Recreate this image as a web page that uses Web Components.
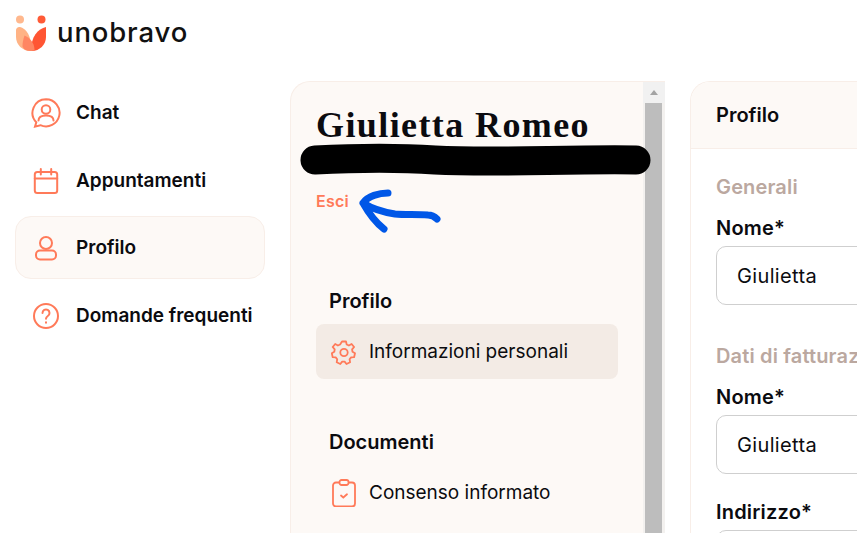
<!DOCTYPE html>
<html lang="it">
<head>
<meta charset="utf-8">
<title>unobravo</title>
<style>
  html, body { margin: 0; height: 100%; overflow: hidden; background: #fff; }
  body { font-family: Inter, "Liberation Sans", sans-serif; color: #0b0b0f; }
</style>
</head>
<body>
<ub-app>
  <ub-logo slot="header"></ub-logo>

  <ub-nav-item slot="nav" label="Chat" icon="chat"></ub-nav-item>
  <ub-nav-item slot="nav" label="Appuntamenti" icon="calendar"></ub-nav-item>
  <ub-nav-item slot="nav" label="Profilo" icon="user" active></ub-nav-item>
  <ub-nav-item slot="nav" label="Domande frequenti" icon="help"></ub-nav-item>

  <ub-account-card slot="account" name="Giulietta Romeo">
    <ub-menu-group title="Profilo">
      <ub-menu-row label="Informazioni personali" icon="gear" active></ub-menu-row>
    </ub-menu-group>
    <ub-menu-group title="Documenti">
      <ub-menu-row label="Consenso informato" icon="clipboard"></ub-menu-row>
    </ub-menu-group>
  </ub-account-card>

  <ub-form-card slot="form" title="Profilo">
    <ub-form-section title="Generali">
      <ub-field label="Nome*" value="Giulietta"></ub-field>
    </ub-form-section>
    <ub-form-section title="Dati di fatturazione">
      <ub-field label="Nome*" value="Giulietta"></ub-field>
      <ub-field label="Indirizzo*" value=""></ub-field>
    </ub-form-section>
  </ub-form-card>
</ub-app>

<script>
// stroke icons shared by the nav and the menu rows
const ICONS = {
  chat: `<svg width="30" height="30" viewBox="0 0 30 30"><path d="M15 1.2a13.6 13.6 0 1 1-5.6 26l-5.4 1.4 1.3-4.4A13.6 13.6 0 0 1 15 1.2z"/><circle cx="15" cy="11.5" r="4.3"/><path d="M7.5 22.5c0-3.4 3-5 7.5-5s7.5 1.6 7.5 5"/></svg>`,
  calendar: `<svg width="26" height="26" viewBox="0 0 26 26"><rect x="1.8" y="4" width="22.4" height="21" rx="2.5"/><path d="M1.8 10.5h22.4M7.8 1v5.5M18.2 1v5.5"/></svg>`,
  user: `<svg width="24" height="26" viewBox="0 0 24 26"><circle cx="12" cy="8" r="6"/><rect x="2" y="15.5" width="20" height="9" rx="4"/></svg>`,
  help: `<svg width="28" height="28" viewBox="0 0 28 28"><circle cx="14" cy="14" r="12"/><path d="M10.5 11a3.5 3.5 0 1 1 5.3 3c-1.2.8-1.8 1.5-1.8 2.7"/><path d="M14 20.3v.4"/></svg>`,
  gear: `<svg width="26" height="26" viewBox="0 0 26 26"><path d="M11 2.5h4l.7 3 2.2 1 2.7-1.5 2.5 3-2 2.4.4 2.4 2.5 1.5-.9 3.9-3 .2-1.5 1.9.5 3-3.6 1.7-1.9-2.4h-2.4l-1.9 2.4-3.6-1.7.5-3-1.5-1.9-3-.2-.9-3.9 2.5-1.5.4-2.4-2-2.4 2.5-3 2.7 1.5 2.2-1z" stroke-linejoin="round"/><circle cx="13" cy="13.5" r="3.7"/></svg>`,
  clipboard: `<svg width="26" height="28" viewBox="0 0 26 28"><rect x="2" y="3.5" width="22" height="24" rx="3"/><rect x="8.5" y="1" width="9" height="5" rx="2" fill="#fdf9f6"/><path d="M10 16.5l2.3 2 3.7-3.2"/></svg>`
};

const define = (tag, css, html) => {
  customElements.define(tag, class extends HTMLElement {
    connectedCallback() {
      if (this.shadowRoot) return;
      this.attachShadow({mode: "open"});
      this.shadowRoot.innerHTML = `<style>${css}</style>${html(this)}`;
    }
  });
};

define("ub-app", `
  :host { display: block; width: 857px; height: 533px; overflow: hidden; }
  header { height: 66px; padding-left: 15px; display: flex; align-items: center; }
  main { display: grid; grid-template-columns: 290px 375px 1fr; height: 467px; }
  .nav { padding: 15px 0 0 15px; width: 250px; display: flex; flex-direction: column; gap: 4px; }
  .account { padding-top: 15px; min-height: 0; }
  .form { padding: 15px 0 0 25px; min-width: 0; }
`, () => `
  <header><slot name="header"></slot></header>
  <main>
    <div class="nav"><slot name="nav"></slot></div>
    <div class="account"><slot name="account"></slot></div>
    <div class="form"><slot name="form"></slot></div>
  </main>
`);

define("ub-logo", `
  :host { display: flex; align-items: center; gap: 9px; margin-top: 1px; }
  svg { display: block; }
  span { font: 500 27.5px/36px Inter, sans-serif; letter-spacing: .85px; color: #111; margin-top: -3px; }
`, () => `
  <svg width="33" height="37" viewBox="0 0 33 37">
    <circle cx="5" cy="4.5" r="4" fill="#ffb88e"/>
    <circle cx="26.5" cy="4.5" r="4" fill="#ff5a36"/>
    <path d="M1 15c0-2 2-3.5 4-3 6 1.5 11.5 8 11.5 24C8 36.5 1 30 1 22z" fill="#ffb385"/>
    <path d="M31 12c-8 2-15 9-15 24 8 .5 15-6 15-14z" fill="#ff5533"/>
    <path d="M9.5 20.5c5 2 10 7 10 14.5-1 .8-2.5 1-4 1-4 0-6.5-1.5-8-4.500 0-4 .8-7.500 2-11z" fill="#ff8662"/>
  </svg>
  <span>unobravo</span>
`);

define("ub-nav-item", `
  :host { display: flex; align-items: center; height: 63px; box-sizing: border-box; border: 1px solid transparent; border-radius: 16px; font: 600 19px/24px Inter, sans-serif; color: #0b0b0f; }
  :host(:nth-of-type(even)) { margin-top: 1px; }
  :host([active]) { background: #fdf9f6; border-color: #f8eee8; }
  .ico { width: 60px; display: flex; justify-content: center; }
  svg { display: block; fill: none; stroke: #ff7a59; stroke-width: 2; stroke-linecap: round; }
`, el => `
  <span class="ico">${ICONS[el.getAttribute("icon")]}</span>
  <span>${el.getAttribute("label")}</span>
`);

define("ub-scrollbar", `
  :host { display: flex; flex-direction: column; width: 22px; background: #f3f1ef; padding: 0 3px 0 2px; box-sizing: border-box; flex: none; }
  .up { height: 21px; display: flex; align-items: center; justify-content: center; margin: 0 -3px 0 -2px; background: #f1f1f1; }
  .up i { width: 0; height: 0; border: 4.5px solid transparent; border-top: 0; border-bottom: 5px solid #a3a3a3; }
  .thumb { flex: 1; background: #bdbdbd; }
`, () => `<div class="up"><i></i></div><div class="thumb"></div>`);

define("ub-account-card", `
  :host { display: block; position: relative; height: 100%; }
  .card { display: flex; height: 100%; box-sizing: border-box; border: 1px solid #f8eee8; border-bottom: 0; border-right: 0; border-radius: 20px 0 0 0; background: #fdf9f6; overflow: hidden; }
  .body { flex: 1; min-width: 0; padding: 21px 25px 0 25px; }
  h1 { margin: 0; font: 700 36px/44px "Liberation Serif", serif; letter-spacing: 1.4px; color: #0b0b0f; white-space: nowrap; }
  .mail { height: 31px; }
  a { display: block; margin-top: 13px; font: 600 16px/20px Inter, sans-serif; color: #ff7a59; letter-spacing: .25px; }
  .groups { margin-top: 78px; }
  /* felt-pen marks drawn over the screenshot */
  svg { position: absolute; left: 0; top: 0; pointer-events: none; overflow: visible; }
`, el => `
  <div class="card">
    <div class="body">
      <h1>${el.getAttribute("name")}</h1>
      <div class="mail"></div>
      <a>Esci</a>
      <div class="groups"><slot></slot></div>
    </div>
    <ub-scrollbar></ub-scrollbar>
  </div>
  <svg width="375" height="160" viewBox="0 0 375 160">
    <path d="M25 79c60-3 90-2 120 0 60 3 131-1 201 0" fill="none" stroke="#000" stroke-width="29" stroke-linecap="round"/>
    <path d="M98 112c-9 0-20 3-25 10 8 5 19 9 32 11 10 1 22 0 33 1 5 0 7 2 9 4M73 122c5 9 12 19 21 26" fill="none" stroke="#0057e7" stroke-width="7" stroke-linecap="round" stroke-linejoin="round"/>
  </svg>
`);

define("ub-menu-group", `
  :host { display: block; margin-bottom: 51px; }
  h2 { margin: 0 0 11px 13px; font: 600 20px/24px Inter, sans-serif; color: #0b0b0f; }
`, el => `<h2>${el.getAttribute("title")}</h2><slot></slot>`);

define("ub-menu-row", `
  :host { display: flex; align-items: center; width: 302px; height: 55px; border-radius: 8px; font: 400 19px/24px Inter, sans-serif; color: #0b0b0f; }
  :host([active]) { background: #f3ebe5; }
  .ico { width: 53px; display: flex; justify-content: center; padding-left: 3px; box-sizing: border-box; }
  svg { display: block; fill: none; stroke: #ff7a59; stroke-width: 1.8; stroke-linecap: round; }
`, el => `
  <span class="ico">${ICONS[el.getAttribute("icon")]}</span>
  <span>${el.getAttribute("label")}</span>
`);

define("ub-form-card", `
  :host { display: block; height: 100%; box-sizing: border-box; border: 1px solid #f8eee8; border-bottom: 0; border-right: 0; border-radius: 20px 0 0 0; overflow: hidden; width: 190px; }
  header { height: 67px; box-sizing: border-box; padding-left: 25px; display: flex; align-items: center; background: #fdf9f6; border-bottom: 1px solid #f8eee8; font: 600 20px/24px Inter, sans-serif; color: #0b0b0f; }
  .body { padding: 26px 0 0 25px; }
`, el => `<header>${el.getAttribute("title")}</header><div class="body"><slot></slot></div>`);

define("ub-form-section", `
  :host { display: block; margin-bottom: 39px; }
  h3 { margin: 0; font: 600 20px/24px Inter, sans-serif; letter-spacing: .15px; color: #bba8a0; white-space: nowrap; }
`, el => `<h3>${el.getAttribute("title")}</h3><slot></slot>`);

define("ub-field", `
  :host { display: block; margin-top: 17px; }
  label { display: block; font: 600 20px/24px Inter, sans-serif; letter-spacing: .2px; color: #0b0b0f; margin-bottom: 6px; }
  .input { box-sizing: border-box; width: 200px; height: 59px; border: 1px solid #cfcfcf; border-radius: 10px; background: #fff; padding-left: 20px; display: flex; align-items: center; font: 400 20px/24px Inter, sans-serif; letter-spacing: .35px; color: #0b0b0f; }
  :host(:nth-of-type(2)) { margin-top: 26px; }
`, el => `
  <label>${el.getAttribute("label")}</label>
  <div class="input">${el.getAttribute("value")}</div>
`);
</script>
</body>
</html>
